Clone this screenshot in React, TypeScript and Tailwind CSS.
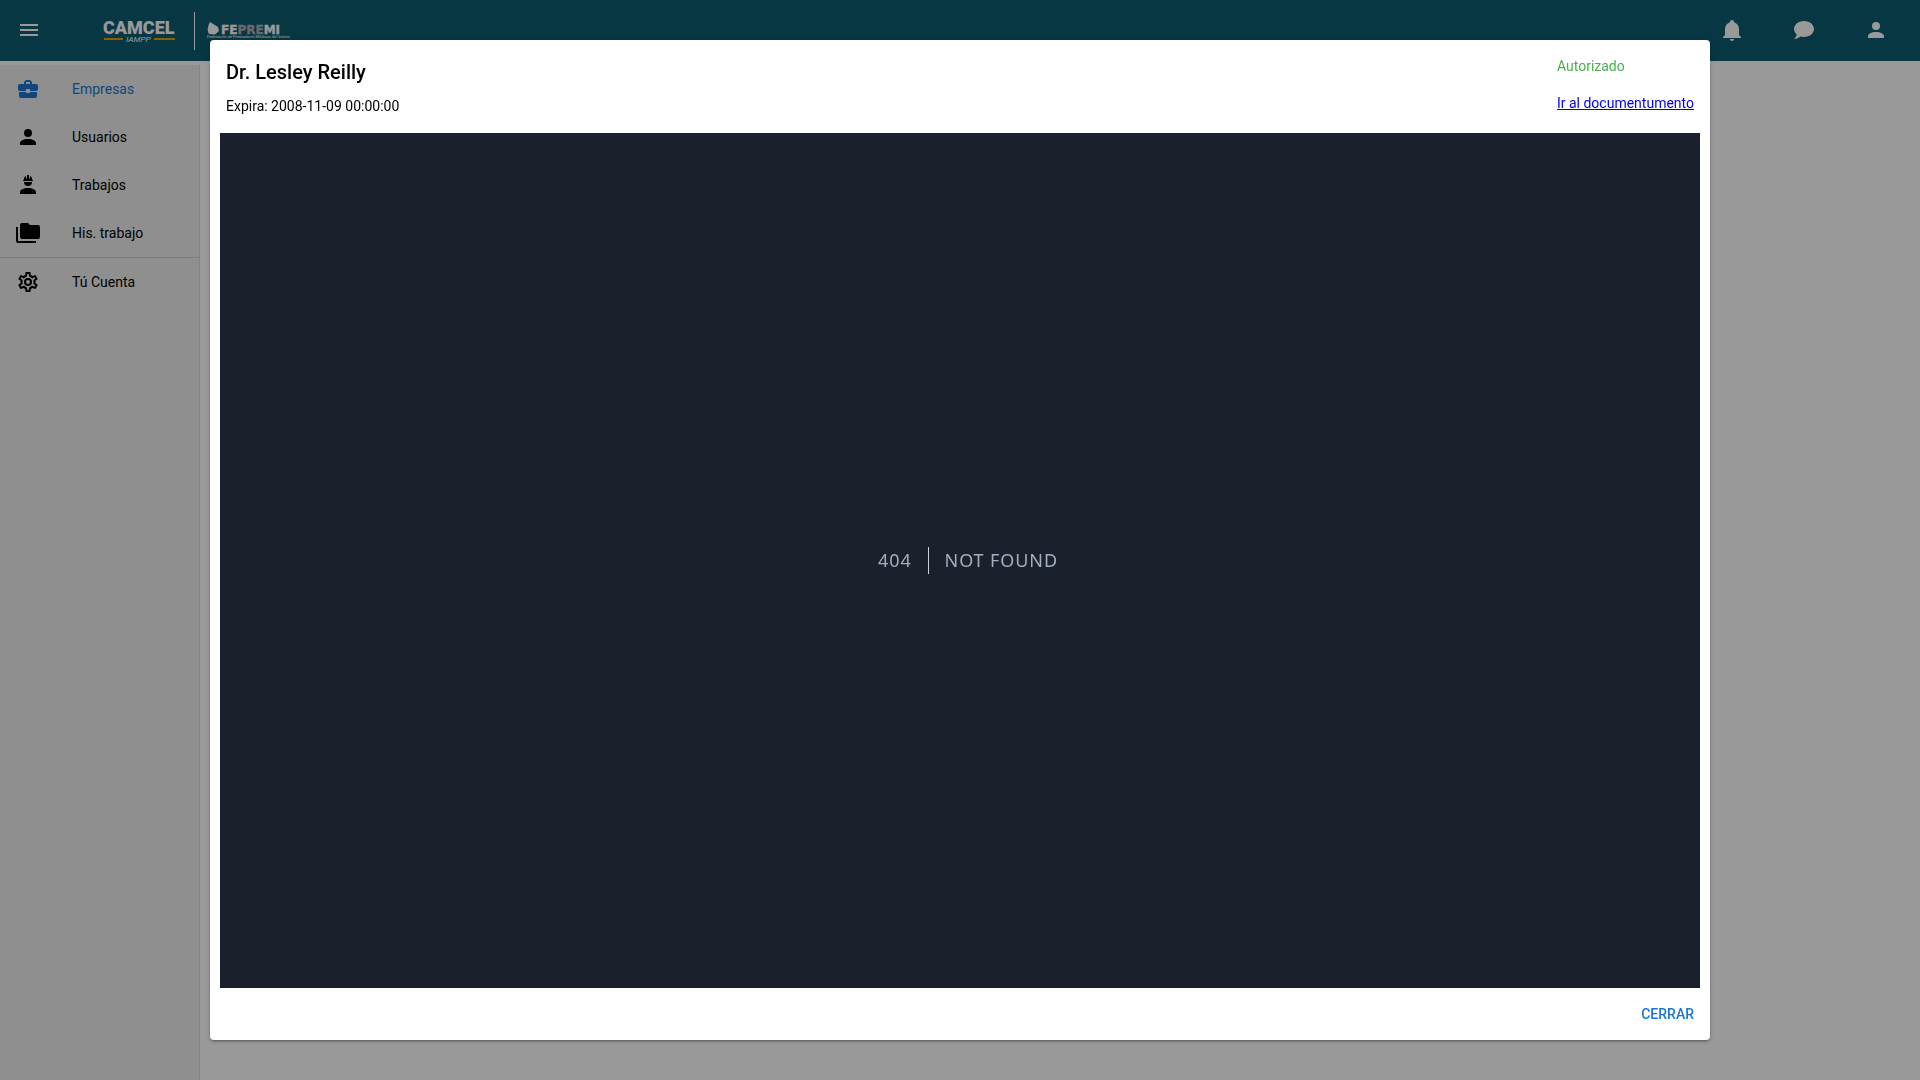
import React from "react";

const paths = {
  account:
    "M12,4A4,4 0 0,1 16,8A4,4 0 0,1 12,12A4,4 0 0,1 8,8A4,4 0 0,1 12,4M12,14C16.42,14 20,15.79 20,18V20H4V18C4,15.79 7.58,14 12,14Z",
  bell: "M21,19V20H3V19L5,17V11C5,7.9 7.03,5.17 10,4.29C10,4.19 10,4.1 10,4A2,2 0 0,1 12,2A2,2 0 0,1 14,4C14,4.1 14,4.19 14,4.29C16.97,5.17 19,7.9 19,11V17L21,19M14,21A2,2 0 0,1 12,23A2,2 0 0,1 10,21",
  chat: "M12,3C17.5,3 22,6.58 22,11C22,15.42 17.5,19 12,19C10.76,19 9.57,18.82 8.47,18.5C5.55,21 2,21 2,21C4.33,18.67 4.7,17.1 4.75,16.5C3.05,15.07 2,13.13 2,11C2,6.58 6.5,3 12,3Z",
  menu: "M3,6H21V8H3V6M3,11H21V13H3V11M3,16H21V18H3V16Z",
  briefcase:
    "M10,3L8,5V7H4C2.9,7 2,7.9 2,9V12C2,13.1 2.9,14 4,14H10V12H14V14H20C21.1,14 22,13.1 22,12V9C22,7.9 21.1,7 20,7H16V5L14,3H10M10,5H14V7H10V5M3,15V19A2,2 0 0,0 5,21H19A2,2 0 0,0 21,19V15H14V16H10V15H3Z",
  worker:
    "M12,15C7.58,15 4,16.79 4,19V21H20V19C20,16.79 16.42,15 12,15M8,9A4,4 0 0,0 12,13A4,4 0 0,0 16,9M11.5,2C11.2,2 11,2.21 11,2.5V5.5H10V3C10,3 7.75,3.86 7.75,6.75C7.75,6.75 7,6.89 7,8H17C16.95,6.89 16.25,6.75 16.25,6.75C16.25,3.86 14,3 14,3V5.5H13V2.5C13,2.21 12.81,2 12.5,2H11.5Z",
  folders:
    "M22,4H14L12,2H6A2,2 0 0,0 4,4V16A2,2 0 0,0 6,18H22A2,2 0 0,0 24,16V6A2,2 0 0,0 22,4M2,6H0V11H0V20A2,2 0 0,0 2,22H20V20H2V6Z",
  cog: "M12,8A4,4 0 0,1 16,12A4,4 0 0,1 12,16A4,4 0 0,1 8,12A4,4 0 0,1 12,8M12,10A2,2 0 0,0 10,12A2,2 0 0,0 12,14A2,2 0 0,0 14,12A2,2 0 0,0 12,10M10,22C9.75,22 9.54,21.82 9.5,21.58L9.13,18.93C8.5,18.68 7.96,18.34 7.44,17.94L4.95,18.95C4.73,19.03 4.46,18.95 4.34,18.73L2.34,15.27C2.21,15.05 2.27,14.78 2.46,14.63L4.57,12.97L4.5,12L4.57,11L2.46,9.37C2.27,9.22 2.21,8.95 2.34,8.73L4.34,5.27C4.46,5.05 4.73,4.96 4.95,5.05L7.44,6.05C7.96,5.66 8.5,5.32 9.13,5.07L9.5,2.42C9.54,2.18 9.75,2 10,2H14C14.25,2 14.46,2.18 14.5,2.42L14.87,5.07C15.5,5.32 16.04,5.66 16.56,6.05L19.05,5.05C19.27,4.96 19.54,5.05 19.66,5.27L21.66,8.73C21.79,8.95 21.73,9.22 21.54,9.37L19.43,11L19.5,12L19.43,13L21.54,14.63C21.73,14.78 21.79,15.05 21.66,15.27L19.66,18.73C19.54,18.95 19.27,19.04 19.05,18.95L16.56,17.95C16.04,18.34 15.5,18.68 14.87,18.93L14.5,21.58C14.46,21.82 14.25,22 14,22H10M11.25,4L10.88,6.61C9.68,6.86 8.62,7.5 7.85,8.39L5.44,7.35L4.69,8.6L6.8,10.15C6.4,11.37 6.4,12.64 6.8,13.85L4.68,15.41L5.43,16.66L7.86,15.62C8.63,16.5 9.68,17.14 10.87,17.38L11.24,20H12.76L13.13,17.39C14.32,17.14 15.37,16.5 16.14,15.62L18.57,16.66L19.32,15.41L17.2,13.86C17.6,12.64 17.6,11.37 17.2,10.15L19.31,8.6L18.56,7.35L16.15,8.39C15.38,7.5 14.32,6.86 13.12,6.62L12.75,4H11.25Z",
};

function Icon({ name }: { name: keyof typeof paths }) {
  return (
    <svg viewBox="0 0 24 24" className="size-6 shrink-0" fill="currentColor" aria-hidden="true">
      <path d={paths[name]} />
    </svg>
  );
}

function NavItem({ icon, label, active }: { icon: keyof typeof paths; label: string; active?: boolean }) {
  return (
    <a
      href="#"
      className={
        active
          ? "flex h-12 items-center gap-8 px-4 text-[#1976d2]"
          : "flex h-12 items-center gap-8 px-4 text-black"
      }
    >
      <Icon name={icon} />
      {label}
    </a>
  );
}

function Logos() {
  return (
    <svg viewBox="0 0 190 40" className="h-10 w-[190px]" role="img" aria-label="CAMCEL IAMPP | FEPREMI">
      <text x="3" y="24" fontFamily="Roboto, sans-serif" fontWeight="900" fontSize="18" fill="#fff">
        CAMCEL
      </text>
      <rect x="4" y="28" width="19" height="2" fill="#e8a200" />
      <rect x="54" y="28" width="21" height="2" fill="#e8a200" />
      <text x="26" y="32" fontFamily="Liberation Sans, sans-serif" fontStyle="italic" fontSize="8" fill="#fff">
        IAMPP
      </text>
      <rect x="94" y="2" width="1" height="38" fill="#fff" />
      <path d="M110 12L118 17L119 21L115 24.500L109 24Q106 19 110 12Z" fill="#fff" />
      <text x="121" y="24" fontFamily="DejaVu Sans, sans-serif" fontWeight="700" fontSize="12" fill="#fff" stroke="#fff" strokeWidth="0.4">
        FE<tspan fill="#b3adb8" stroke="#b3adb8">PRE</tspan>MI
      </text>
      <text x="107" y="28" fontFamily="Roboto, sans-serif" fontSize="4" fill="#fff">
        Federación de Prestadores Médicos del Interior
      </text>
    </svg>
  );
}

export default function App() {
  return (
    <div className="flex min-h-screen flex-col bg-white font-['Roboto',sans-serif] text-sm leading-[21px] text-black">
      <header className="flex h-[61px] items-center bg-[#0c5c71] pb-px text-white">
        <button type="button" aria-label="Menú" className="ml-[17px] flex">
          <Icon name="menu" />
        </button>
        <div className="ml-[59px]">
          <Logos />
        </div>
        <div className="ml-auto flex gap-12 pr-8">
          <button type="button" aria-label="Notificaciones">
            <Icon name="bell" />
          </button>
          <button type="button" aria-label="Mensajes">
            <Icon name="chat" />
          </button>
          <button type="button" aria-label="Cuenta">
            <Icon name="account" />
          </button>
        </div>
      </header>
      <nav className="mt-1 w-[200px] grow border-r border-[#dcdcdc] bg-[#eeeeee]">
        <NavItem icon="briefcase" label="Empresas" active />
        <NavItem icon="account" label="Usuarios" />
        <NavItem icon="worker" label="Trabajos" />
        <NavItem icon="folders" label="His. trabajo" />
        <hr className="border-t border-[#d0d0d0]" />
        <NavItem icon="cog" label="Tú Cuenta" />
      </nav>

      <div className="fixed inset-0 flex items-center justify-center bg-black/40 p-10">
        <section
          role="dialog"
          aria-modal="true"
          aria-labelledby="document-title"
          className="flex h-full w-full max-w-[1500px] flex-col rounded bg-white shadow-[0_1px_5px_rgba(0,0,0,0.2),0_2px_2px_rgba(0,0,0,0.14),0_3px_1px_-2px_rgba(0,0,0,0.12)]"
        >
          <div className="flex justify-between p-4">
            <div>
              <h1 id="document-title" className="text-xl leading-8 font-medium">
                Dr. Lesley Reilly
              </h1>
              <p className="mt-2">Expira: 2008-11-09 00:00:00</p>
            </div>
            <div>
              <p className="text-[#4caf50]">Autorizado</p>
              <a href="#" className="mt-4 block text-[#0000ee] underline">
                Ir al documentumento
              </a>
            </div>
          </div>
          <div className="mx-[10px] flex grow items-center justify-center bg-[#1a202c] font-['Noto_Sans',sans-serif] text-lg leading-[27px] tracking-wider text-[#a0aec0]">
            <div className="border-r border-[#cbd5e0] px-4">404</div>
            <div className="ml-4">NOT FOUND</div>
          </div>
          <div className="flex justify-end p-2">
            <button type="button" className="h-9 px-2 font-medium text-[#1976d2]">
              CERRAR
            </button>
          </div>
        </section>
      </div>
    </div>
  );
}
